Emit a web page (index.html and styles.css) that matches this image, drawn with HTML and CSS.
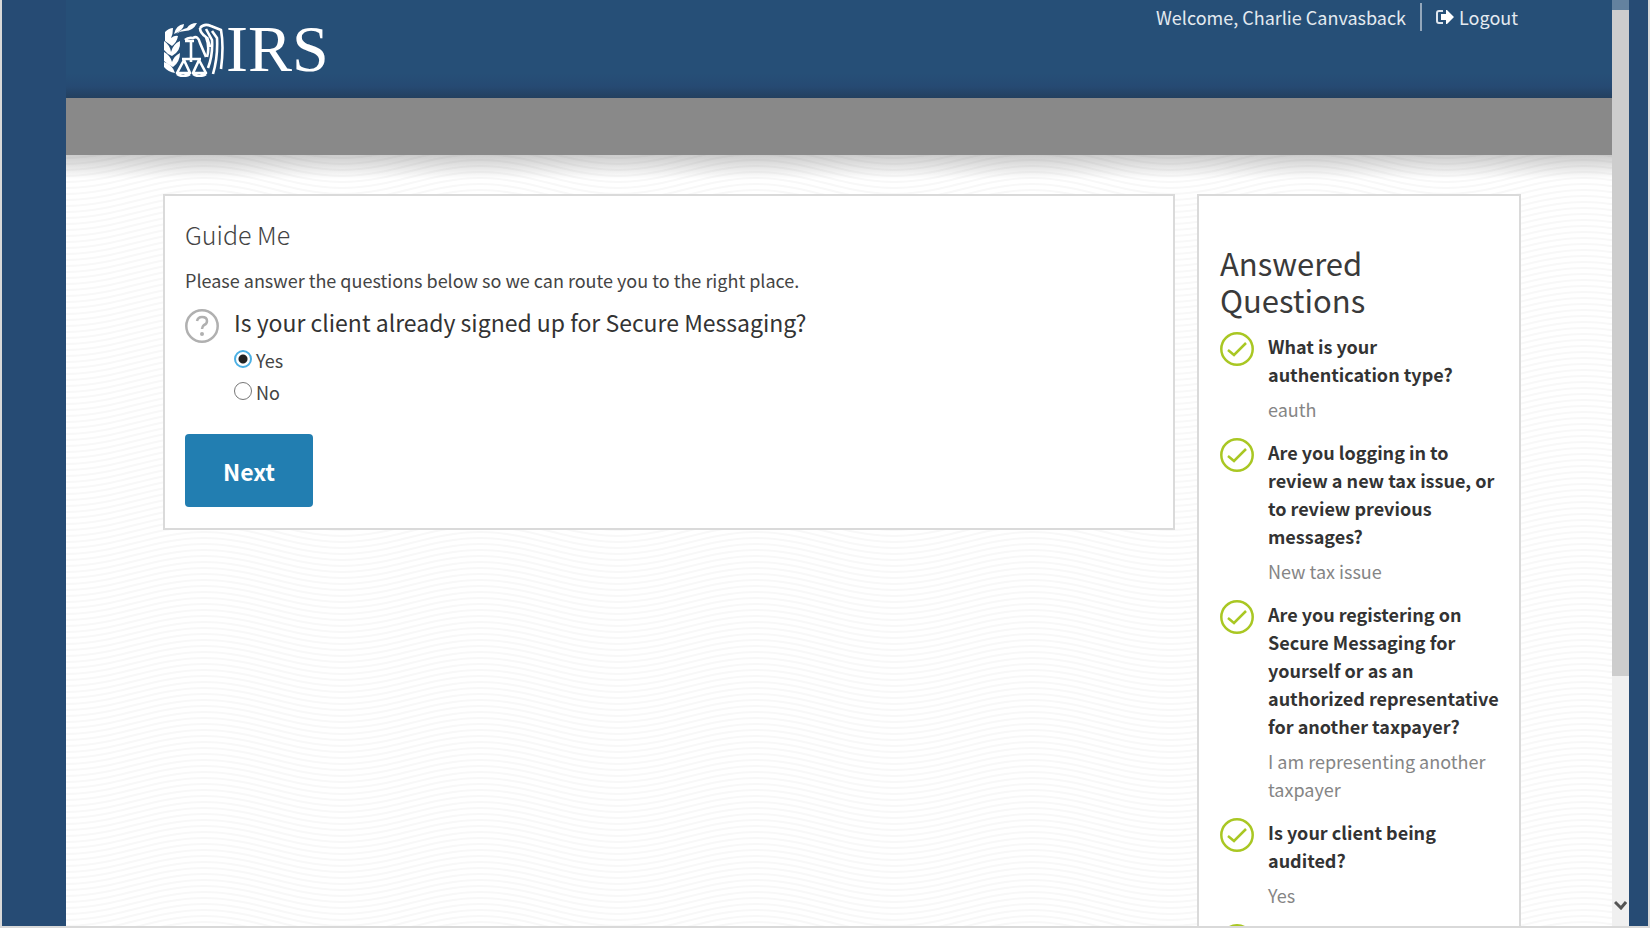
FILE: index.html
```
<!DOCTYPE html>
<html lang="en">
<head>
    <meta charset="UTF-8">
    <meta name="viewport" content="width=device-width, initial-scale=1.0">
    <title>IRS Secure Messaging - Guide Me</title>
    <link rel="stylesheet" href="styles.css">
</head>
<body>

    <!-- Shared check icon -->
    <svg class="sprite" aria-hidden="true">
        <symbol id="check" viewBox="0 0 34 34">
            <circle cx="17" cy="17" r="15.7" fill="none" stroke="#a9c723" stroke-width="2.5"/>
            <path d="M8 18 L14 23 L26 11" fill="none" stroke="#a9c723" stroke-width="2.5"/>
        </symbol>
    </svg>

    <div class="window">
        <div class="page">
            <header class="header">
                <a class="logo" href="#" aria-label="IRS">
                    <svg class="eagle" viewBox="0 0 60 54" aria-hidden="true">
                        <g fill="#fff">
                            <path d="M1 9 Q5 5 9 5 Q9 11 7 15 Q11 12 14 13 Q13 19 8 23 L1 18 Z"/>
                            <path d="M10 11 Q12 2 20 1 Q20 7 10 11 Z"/>
                            <path d="M12 11 Q18 6 23 5 Q26 0 33 0 Q29 8 21 8 Q16 8 12 11 Z"/>
                            <path d="M0 18 Q6 22 7 29 Q9 21 16 18 Q17 28 8 33 Q3 31 0 27 Z"/>
                            <path d="M0 29 Q6 32 8 39 Q10 33 16 30 Q16 39 9 44 Q3 41 0 38 Z"/>
                            <path d="M0 39 Q8 41 11 50 Q4 49 0 44 Z"/>
                        </g>
                        <g fill="none" stroke="#fff" stroke-width="2.6" stroke-linejoin="round">
                            <path d="M21 17 Q24 14 29 15 Q34 12 36 20 L42 34 M21 18 H30 M27 18 V39"/>
                            <path d="M18 36 H37 M20 37 L13 50 H26 Z M35 37 L29 50 H42 Z M13 51 Q19 55 26 51 M29 51 Q35 55 42 51"/>
                            <path d="M36 5 Q40 0 47 3 L57 7 Q60 23 57 46 M36 5 Q36 10 42 14 Q46 24 43 34 M42 6 L48 17 Q49 32 44 45 M48 8 L53 15 Q54 34 49 51 M43 14 L46 24"/>
                        </g>
                    </svg>
                    <span class="logo-text">IRS</span>
                </a>
                <div class="user">
                    <span class="welcome">Welcome, Charlie Canvasback</span>
                    <a class="logout" href="#">
                        <svg viewBox="0 0 18 14" aria-hidden="true">
                            <path d="M7 1 H3 Q1 1 1 3 V11 Q1 13 3 13 H7" fill="none" stroke="#dfe6ee" stroke-width="2"/>
                            <path d="M5 4 H10 V0 H11 L18 7 L11 14 H10 V10 H5 Z" fill="#fff"/>
                        </svg>
                        Logout
                    </a>
                </div>
            </header>

            <div class="nav-bar"></div>

            <main class="content">
                <section class="panel guide">
                    <h1>Guide Me</h1>
                    <p>Please answer the questions below so we can route you to the right place.</p>
                    <form>
                        <fieldset class="question">
                            <svg class="icon" viewBox="0 0 34 34" aria-hidden="true">
                                <circle cx="17" cy="17" r="15.7" fill="none" stroke="#b0b0b0" stroke-width="2.5"/>
                                <path d="M12 12 Q13 8 17 8 Q22 8 22 12 Q22 15 19 16 Q17 18 17 20" fill="none" stroke="#b0b0b0" stroke-width="2.5"/>
                                <circle cx="17" cy="25" r="2" fill="#b0b0b0"/>
                            </svg>
                            <div>
                                <h2>Is your client already signed up for Secure Messaging?</h2>
                                <div class="option">
                                    <input type="radio" name="signedup" id="yes" checked>
                                    <label for="yes">Yes</label>
                                </div>
                                <div class="option">
                                    <input type="radio" name="signedup" id="no">
                                    <label for="no">No</label>
                                </div>
                            </div>
                        </fieldset>
                        <button type="button">Next</button>
                    </form>
                </section>

                <aside class="panel answered">
                    <h2>Answered Questions</h2>
                    <ul>
                        <li>
                            <svg class="icon"><use href="#check"/></svg>
                            <div>
                                <h3>What is your authentication type?</h3>
                                <p>eauth</p>
                            </div>
                        </li>
                        <li>
                            <svg class="icon"><use href="#check"/></svg>
                            <div>
                                <h3>Are you logging in to review a new tax issue, or to review previous messages?</h3>
                                <p>New tax issue</p>
                            </div>
                        </li>
                        <li>
                            <svg class="icon"><use href="#check"/></svg>
                            <div>
                                <h3>Are you registering on Secure Messaging for yourself or as an authorized representative for another taxpayer?</h3>
                                <p>I am representing another taxpayer</p>
                            </div>
                        </li>
                        <li>
                            <svg class="icon"><use href="#check"/></svg>
                            <div>
                                <h3>Is your client being audited?</h3>
                                <p>Yes</p>
                            </div>
                        </li>
                        <li>
                            <svg class="icon"><use href="#check"/></svg>
                        </li>
                    </ul>
                </aside>
            </main>
        </div>

        <!-- Scroll bar -->
        <div class="scrollbar">
            <div class="thumb"></div>
            <svg viewBox="0 0 13 10" aria-hidden="true">
                <path d="M1 2 L7 8 L12 2" fill="none" stroke="#555" stroke-width="3"/>
            </svg>
        </div>
    </div>

</body>
</html>
```

FILE: styles.css
```
* {
    box-sizing: border-box;
}

body {
    margin: 0;
    font-family: "Noto Sans CJK SC", "Noto Sans", sans-serif;
    font-size: 18px;
    line-height: 28px;
    color: #444;
    background: #264b74;
}

h1, h2, h3, p, ul {
    margin: 0;
    padding: 0;
}

.sprite {
    display: none;
}

/* Outer window */
.window {
    display: flex;
    height: 100vh;
    padding: 0 19px 0 64px;
    border: 2px solid #d9d9d9;
    border-top: 0;
    overflow: hidden;
}

.page {
    flex: 1;
    display: flex;
    flex-direction: column;
    min-width: 0;
    overflow: hidden;
    background: #fff;
}

/* Header */
.header {
    flex: none;
    display: flex;
    justify-content: space-between;
    height: 98px;
    padding: 0 94px 0 98px;
    background: linear-gradient(#264f77 75%, #264a73 88%, #23405f);
}

.logo {
    display: flex;
    margin-top: 23px;
    height: 54px;
    color: #fff;
    text-decoration: none;
}

.eagle {
    width: 60px;
    height: 54px;
    margin-right: 2px;
}

.logo-text {
    font-family: "Liberation Serif", serif;
    font-size: 66px;
    line-height: 52px;
}

.user {
    display: flex;
    align-items: center;
    height: 28px;
    margin-top: 3px;
    color: #e4eaf0;
}

.welcome {
    padding-right: 14px;
    border-right: 2px solid #93a7bb;
}

.logout {
    display: flex;
    align-items: center;
    gap: 5px;
    padding-left: 14px;
    color: inherit;
    text-decoration: none;
}

.logout svg {
    width: 18px;
    height: 14px;
}

.nav-bar {
    flex: none;
    height: 57px;
    background: #898989;
}

/* Main content, shadow over a wavy line pattern */
.content {
    flex: 1;
    display: flex;
    align-items: flex-start;
    gap: 22px;
    padding: 39px 91px 39px 97px;
    background:
        linear-gradient(rgba(0, 0, 0, 0.2), rgba(0, 0, 0, 0) 24px),
        url("data:image/svg+xml,%3Csvg xmlns='http://www.w3.org/2000/svg' width='276' height='6'%3E%3Cg fill='none' stroke='%23f8f8f8' stroke-width='2'%3E%3Cpath d='M0 3 C50 3 88 -19 138 -19 S226 3 276 3'/%3E%3Cpath d='M0 9 C50 9 88 -13 138 -13 S226 9 276 9'/%3E%3Cpath d='M0 15 C50 15 88 -7 138 -7 S226 15 276 15'/%3E%3Cpath d='M0 21 C50 21 88 -1 138 -1 S226 21 276 21'/%3E%3Cpath d='M0 27 C50 27 88 5 138 5 S226 27 276 27'/%3E%3C/g%3E%3C/svg%3E");
}

.panel {
    padding: 20px 20px 21px;
    background: #fff;
    border: 2px solid #dadada;
}

.guide {
    flex: 1;
}

.guide h1 {
    font-size: 25px;
    line-height: 36px;
    font-weight: 300;
}

.guide p {
    margin-top: 14px;
}

.question {
    display: flex;
    gap: 15px;
    margin: 15px 0 0;
    padding: 0;
    border: 0;
}

.icon {
    flex: none;
    width: 34px;
    height: 34px;
}

.question h2 {
    margin-bottom: 8px;
    font-size: 23px;
    line-height: 27px;
    font-weight: 400;
    color: #333;
}

.option {
    display: flex;
    align-items: center;
    gap: 4px;
    height: 32px;
}

.option input {
    appearance: none;
    width: 18px;
    height: 18px;
    margin: 0 0 3px;
    border: 1px solid #777;
    border-radius: 50%;
    background: #fff;
}

.option input:checked {
    border: 2px solid #4cb0e4;
    background: radial-gradient(circle, #222 4px, #fff 5px);
}

button {
    width: 128px;
    height: 73px;
    margin-top: 26px;
    border: 0;
    border-radius: 4px;
    background: #227eb1;
    color: #fff;
    font-family: inherit;
    font-size: 23px;
    font-weight: 700;
    cursor: pointer;
}

/* Answered questions */
.answered {
    width: 324px;
    padding: 48px 16px 20px 21px;
}

.answered h2 {
    font-size: 31px;
    line-height: 37px;
    font-weight: 400;
    color: #3a3a3a;
}

.answered ul {
    margin-top: 14px;
    list-style: none;
}

.answered li {
    display: flex;
    gap: 14px;
    margin-bottom: 15px;
}

.answered h3 {
    font-size: 18px;
    line-height: 28px;
    color: #333;
}

.answered p {
    margin-top: 7px;
    color: #858585;
}

/* Scroll bar */
.scrollbar {
    flex: none;
    display: flex;
    flex-direction: column;
    justify-content: space-between;
    align-items: center;
    width: 17px;
    padding-bottom: 16px;
    border-top: 10px solid #64829f;
    background: #f0f0f0;
}

.thumb {
    width: 17px;
    height: 74%;
    background: #cdcdcd;
}

.scrollbar svg {
    width: 13px;
    height: 10px;
}
```
